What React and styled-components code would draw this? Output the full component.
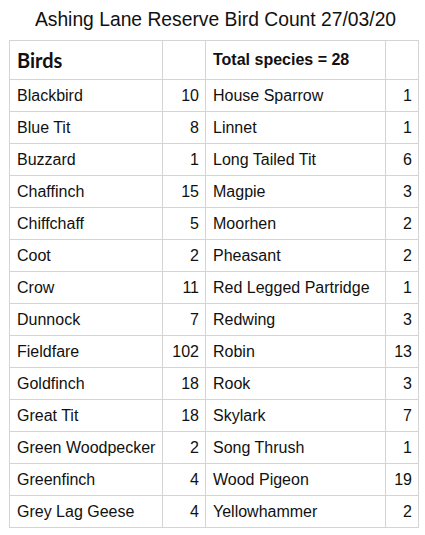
import React from "react";
import styled, { createGlobalStyle } from "styled-components";

const Global = createGlobalStyle`
  html, body { margin: 0; padding: 0; background: #fff; }
  body { font-family: "Liberation Sans", Arial, sans-serif; color: #111; }
`;

const Page = styled.div`
  width: 425px;
  height: 535px;
  box-sizing: border-box;
  padding: 7px 7px 0 9px;
  display: flex;
  flex-direction: column;
  align-items: stretch;
`;

const Title = styled.h1`
  margin: 0;
  height: 33px;
  font-weight: 400;
  font-size: 19.3px;
  line-height: 26px;
  text-align: center;
  color: #111;
  padding-left: 4px;
`;

const Table = styled.table`
  border-collapse: collapse;
  width: 409px;
  table-layout: fixed;
  font-size: 16px;
`;

const Cell = styled.td`
  border: 1px solid #d4d4d4;
  height: ${(p) => (p.$head ? 39 : 32)}px;
  padding: 0 ${(p) => (p.$num ? 6 : 7)}px;
  text-align: ${(p) => (p.$num ? "right" : "left")};
  white-space: nowrap;
  vertical-align: middle;
  box-sizing: border-box;
  color: #111;
`;

const HeadBirds = styled.span`
  font-family: "Lato", "Open Sans", sans-serif;
  font-weight: 700;
  font-size: 20px;
`;

const HeadTotal = styled.span`
  font-weight: 700;
  font-size: 16px;
`;

const left = [
  ["Blackbird", 10],
  ["Blue Tit", 8],
  ["Buzzard", 1],
  ["Chaffinch", 15],
  ["Chiffchaff", 5],
  ["Coot", 2],
  ["Crow", 11],
  ["Dunnock", 7],
  ["Fieldfare", 102],
  ["Goldfinch", 18],
  ["Great Tit", 18],
  ["Green Woodpecker", 2],
  ["Greenfinch", 4],
  ["Grey Lag Geese", 4],
];
const right = [
  ["House Sparrow", 1],
  ["Linnet", 1],
  ["Long Tailed Tit", 6],
  ["Magpie", 3],
  ["Moorhen", 2],
  ["Pheasant", 2],
  ["Red Legged Partridge", 1],
  ["Redwing", 3],
  ["Robin", 13],
  ["Rook", 3],
  ["Skylark", 7],
  ["Song Thrush", 1],
  ["Wood Pigeon", 19],
  ["Yellowhammer", 2],
];

export default function App() {
  return (
    <Page>
      <Global />
      <Title>Ashing Lane Reserve Bird Count 27/03/20</Title>
      <Table>
        <colgroup>
          <col style={{ width: 153 }} />
          <col style={{ width: 43 }} />
          <col style={{ width: 180 }} />
          <col style={{ width: 33 }} />
        </colgroup>
        <tbody>
          <tr>
            <Cell $head>
              <HeadBirds>Birds</HeadBirds>
            </Cell>
            <Cell $head />
            <Cell $head>
              <HeadTotal>Total species = 28</HeadTotal>
            </Cell>
            <Cell $head />
          </tr>
          {left.map((l, i) => (
            <tr key={l[0]}>
              <Cell>{l[0]}</Cell>
              <Cell $num>{l[1]}</Cell>
              <Cell>{right[i][0]}</Cell>
              <Cell $num>{right[i][1]}</Cell>
            </tr>
          ))}
        </tbody>
      </Table>
    </Page>
  );
}
